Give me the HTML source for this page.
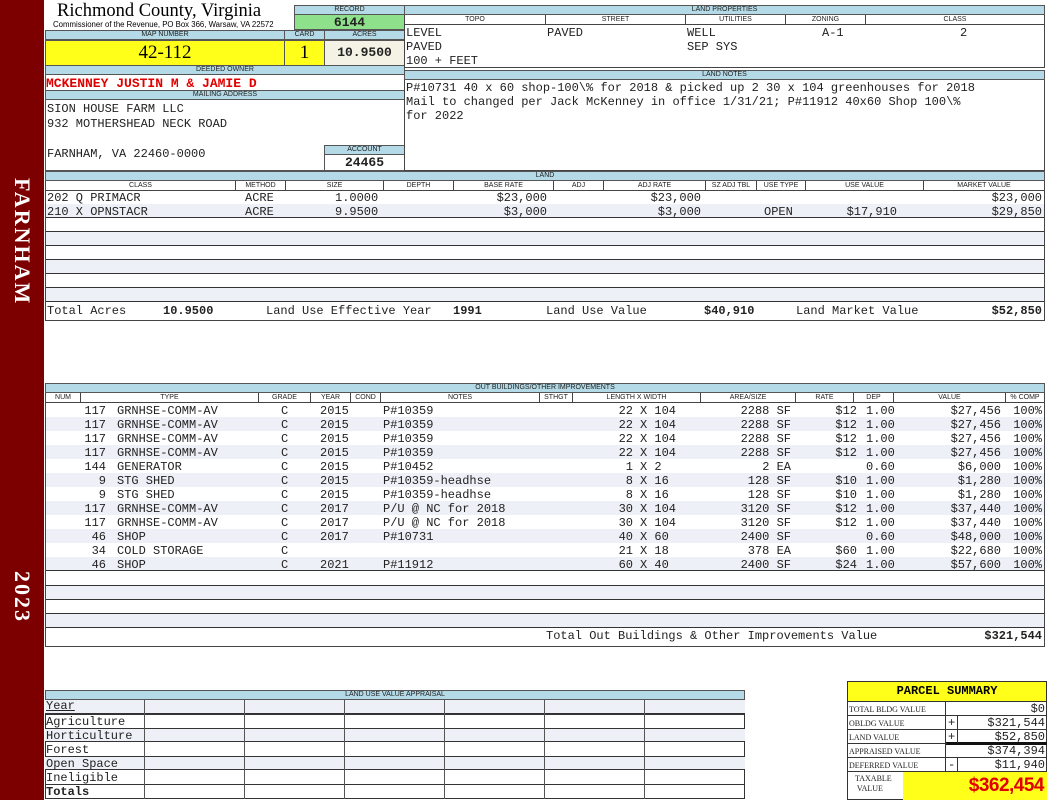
<!DOCTYPE html>
<html><head><meta charset="utf-8"><style>
*{margin:0;padding:0;box-sizing:border-box}
body{width:1050px;height:800px;background:#fff;position:relative;overflow:hidden;font-family:"Liberation Mono",monospace;font-size:12px;color:#222}
.a{position:absolute;white-space:pre}
.bar{position:absolute;background:#b3dae6;border:1px solid #555;font-family:"Liberation Sans",sans-serif;font-size:7px;text-align:center;line-height:8px;color:#222}
.hd{position:absolute;border:1px solid #444;border-top:none;font-family:"Liberation Sans",sans-serif;font-size:7px;text-align:center;line-height:9px;height:10px;background:#fff}
.row{position:absolute;left:45px;width:1000px;height:14px;border-bottom:1px solid #333}
.lt{background:#eef0f7}
.r{text-align:right}
.b{font-weight:bold}
.vt{position:absolute;color:#fff;font-family:"Liberation Serif",serif;font-weight:bold;font-size:22px;transform:rotate(90deg);transform-origin:left top;letter-spacing:2px}
</style></head><body>
<div style="position:absolute;left:0;top:0;width:44px;height:800px;background:#7c0000"></div>
<div class="vt" style="left:35px;top:178px">FARNHAM</div>
<div class="vt" style="left:35px;top:571px">2023</div>

<div class="a" style="left:57px;top:1px;font-family:'Liberation Serif',serif;font-size:18.5px;color:#000">Richmond County, Virginia</div>
<div class="a" style="left:53px;top:20px;font-family:'Liberation Sans',sans-serif;font-size:7.8px;color:#000">Commissioner of the Revenue, PO Box 366, Warsaw, VA 22572</div>

<div class="bar" style="left:294px;top:5px;width:111px;height:10px">RECORD</div>
<div class="a b" style="left:294px;top:15px;width:111px;height:15px;background:#8fe08a;border:1px solid #555;border-top:none;text-align:center;font-size:13px;line-height:15px">6144</div>

<div class="bar" style="left:45px;top:30px;width:240px;height:10px">MAP NUMBER</div>
<div class="bar" style="left:284px;top:30px;width:41px;height:10px">CARD</div>
<div class="bar" style="left:324px;top:30px;width:81px;height:10px">ACRES</div>
<div class="a" style="left:45px;top:40px;width:240px;height:26px;background:#ffff1a;border:1px solid #555;text-align:center;font-family:'Liberation Serif',serif;font-size:19px;line-height:24px;color:#000">42-112</div>
<div class="a" style="left:284px;top:40px;width:41px;height:26px;background:#ffff1a;border:1px solid #555;text-align:center;font-family:'Liberation Serif',serif;font-size:19px;line-height:24px;color:#000">1</div>
<div class="a b" style="left:324px;top:40px;width:81px;height:26px;background:#f4f2e4;border:1px solid #555;text-align:center;font-size:13px;line-height:24px">10.9500</div>
<div class="bar" style="left:45px;top:65px;width:360px;height:10px">DEEDED OWNER</div>
<div class="a b" style="left:46px;top:76px;color:#e00000;font-size:13px">MCKENNEY JUSTIN M &amp; JAMIE D</div>
<div class="bar" style="left:45px;top:90px;width:360px;height:10px">MAILING ADDRESS</div>
<div class="a" style="left:47px;top:102px">SION HOUSE FARM LLC</div>
<div class="a" style="left:47px;top:117px">932 MOTHERSHEAD NECK ROAD</div>
<div class="a" style="left:47px;top:147px">FARNHAM, VA 22460-0000</div>
<div class="bar" style="left:324px;top:145px;width:81px;height:10px">ACCOUNT</div>
<div class="a b" style="left:324px;top:155px;width:81px;height:16px;border:1px solid #555;border-top:none;text-align:center;font-size:13px;line-height:15px">24465</div>
<div style="position:absolute;left:45px;top:65px;width:360px;height:106px;border:1px solid #555"></div>

<div class="bar" style="left:404px;top:5px;width:641px;height:10px">LAND PROPERTIES</div>
<div class="hd" style="left:404px;top:15px;width:142px">TOPO</div>
<div class="hd" style="left:545px;top:15px;width:141px">STREET</div>
<div class="hd" style="left:685px;top:15px;width:101px">UTILITIES</div>
<div class="hd" style="left:785px;top:15px;width:81px">ZONING</div>
<div class="hd" style="left:865px;top:15px;width:180px">CLASS</div>
<div style="position:absolute;left:404px;top:25px;width:641px;height:43px;border:1px solid #444;border-top:none"></div>
<div class="a" style="left:406px;top:26px;line-height:14px">LEVEL
PAVED
100 + FEET</div>
<div class="a" style="left:547px;top:26px">PAVED</div>
<div class="a" style="left:687px;top:26px;line-height:14px">WELL
SEP SYS</div>
<div class="a" style="left:822px;top:26px">A-1</div>
<div class="a" style="left:960px;top:26px">2</div>
<div class="bar" style="left:404px;top:70px;width:641px;height:10px">LAND NOTES</div>
<div style="position:absolute;left:404px;top:80px;width:641px;height:91px;border:1px solid #444;border-top:none"></div>
<div class="a" style="left:406px;top:81px;line-height:14px">P#10731 40 x 60 shop-100\% for 2018 &amp; picked up 2 30 x 104 greenhouses for 2018
Mail to changed per Jack McKenney in office 1/31/21; P#11912 40x60 Shop 100\%
for 2022</div>

<div class="bar" style="left:45px;top:171px;width:1000px;height:10px">LAND</div>
<div class="hd" style="left:45px;top:181px;width:191px">CLASS</div>
<div class="hd" style="left:235px;top:181px;width:51px">METHOD</div>
<div class="hd" style="left:285px;top:181px;width:99px">SIZE</div>
<div class="hd" style="left:383px;top:181px;width:71px">DEPTH</div>
<div class="hd" style="left:453px;top:181px;width:101px">BASE RATE</div>
<div class="hd" style="left:553px;top:181px;width:51px">ADJ</div>
<div class="hd" style="left:603px;top:181px;width:103px">ADJ RATE</div>
<div class="hd" style="left:705px;top:181px;width:52px">SZ ADJ TBL</div>
<div class="hd" style="left:756px;top:181px;width:50px">USE TYPE</div>
<div class="hd" style="left:805px;top:181px;width:119px">USE VALUE</div>
<div class="hd" style="left:923px;top:181px;width:122px">MARKET VALUE</div>
<div class="row" style="top:190px;border-bottom:none"></div>
<div class="row lt" style="top:204px"></div>
<div class="row" style="top:218px"></div>
<div class="row lt" style="top:232px"></div>
<div class="row" style="top:246px"></div>
<div class="row lt" style="top:260px"></div>
<div class="row" style="top:274px"></div>
<div class="row lt" style="top:288px"></div>
<div style="position:absolute;left:45px;top:190px;width:1000px;height:131px;border:1px solid #444;border-top:none"></div>
<div class="a" style="left:47px;top:191px;line-height:14px">202 Q PRIMACR
210 X OPNSTACR</div>
<div class="a" style="left:245px;top:191px;line-height:14px">ACRE
ACRE</div>
<div class="a" style="left:335px;top:191px;line-height:14px">1.0000
9.9500</div>
<div class="a r" style="left:440px;width:107px;top:191px;line-height:14px">$23,000
$3,000</div>
<div class="a r" style="left:590px;width:111px;top:191px;line-height:14px">$23,000
$3,000</div>
<div class="a" style="left:764px;top:205px">OPEN</div>
<div class="a r" style="left:790px;width:107px;top:205px">$17,910</div>
<div class="a r" style="left:930px;width:112px;top:191px;line-height:14px">$23,000
$29,850</div>
<div class="a" style="left:47px;top:304px">Total Acres</div>
<div class="a b" style="left:163px;top:304px">10.9500</div>
<div class="a" style="left:266px;top:304px">Land Use Effective Year</div>
<div class="a b" style="left:453px;top:304px">1991</div>
<div class="a" style="left:546px;top:304px">Land Use Value</div>
<div class="a b" style="left:704px;top:304px">$40,910</div>
<div class="a" style="left:796px;top:304px">Land Market Value</div>
<div class="a b r" style="left:930px;width:112px;top:304px">$52,850</div>

<div class="bar" style="left:45px;top:383px;width:1000px;height:10px">OUT BUILDINGS/OTHER IMPROVEMENTS</div>
<div class="hd" style="left:45px;top:393px;width:36px">NUM</div>
<div class="hd" style="left:80px;top:393px;width:179px">TYPE</div>
<div class="hd" style="left:258px;top:393px;width:53px">GRADE</div>
<div class="hd" style="left:310px;top:393px;width:41px">YEAR</div>
<div class="hd" style="left:350px;top:393px;width:31px">COND</div>
<div class="hd" style="left:380px;top:393px;width:160px">NOTES</div>
<div class="hd" style="left:539px;top:393px;width:34px">STHGT</div>
<div class="hd" style="left:572px;top:393px;width:129px">LENGTH X WIDTH</div>
<div class="hd" style="left:700px;top:393px;width:96px">AREA/SIZE</div>
<div class="hd" style="left:795px;top:393px;width:59px">RATE</div>
<div class="hd" style="left:853px;top:393px;width:41px">DEP</div>
<div class="hd" style="left:893px;top:393px;width:113px">VALUE</div>
<div class="hd" style="left:1005px;top:393px;width:40px">% COMP</div>
<div class="row" style="top:403px;border-bottom:none"></div>
<div class="row lt" style="top:417px;border-bottom:none"></div>
<div class="row" style="top:431px;border-bottom:none"></div>
<div class="row lt" style="top:445px;border-bottom:none"></div>
<div class="row" style="top:459px;border-bottom:none"></div>
<div class="row lt" style="top:473px;border-bottom:none"></div>
<div class="row" style="top:487px;border-bottom:none"></div>
<div class="row lt" style="top:501px;border-bottom:none"></div>
<div class="row" style="top:515px;border-bottom:none"></div>
<div class="row lt" style="top:529px;border-bottom:none"></div>
<div class="row" style="top:543px;border-bottom:none"></div>
<div class="row lt" style="top:557px"></div>
<div class="row" style="top:572px"></div>
<div class="row lt" style="top:586px"></div>
<div class="row" style="top:600px"></div>
<div class="row lt" style="top:614px"></div>
<div style="position:absolute;left:45px;top:403px;width:1000px;height:244px;border:1px solid #444;border-top:none"></div>
<div class="a r" style="left:55px;width:51px;top:404px;line-height:14px">117
117
117
117
144
9
9
117
117
46
34
46</div>
<div class="a" style="left:117px;top:404px;line-height:14px">GRNHSE-COMM-AV
GRNHSE-COMM-AV
GRNHSE-COMM-AV
GRNHSE-COMM-AV
GENERATOR
STG SHED
STG SHED
GRNHSE-COMM-AV
GRNHSE-COMM-AV
SHOP
COLD STORAGE
SHOP</div>
<div class="a" style="left:281px;top:404px;line-height:14px">C
C
C
C
C
C
C
C
C
C
C
C</div>
<div class="a" style="left:320px;top:404px;line-height:14px">2015
2015
2015
2015
2015
2015
2015
2017
2017
2017

2021</div>
<div class="a" style="left:383px;top:404px;line-height:14px">P#10359
P#10359
P#10359
P#10359
P#10452
P#10359-headhse
P#10359-headhse
P/U @ NC for 2018
P/U @ NC for 2018
P#10731

P#11912</div>
<div class="a r" style="left:590px;width:43px;top:404px;line-height:14px">22
22
22
22
1
8
8
30
30
40
21
60</div>
<div class="a" style="left:640px;top:404px;line-height:14px">X 104
X 104
X 104
X 104
X 2
X 16
X 16
X 104
X 104
X 60
X 18
X 40</div>
<div class="a r" style="left:700px;width:91px;top:404px;line-height:14px">2288 SF
2288 SF
2288 SF
2288 SF
2 EA
128 SF
128 SF
3120 SF
3120 SF
2400 SF
378 EA
2400 SF</div>
<div class="a r" style="left:800px;width:57px;top:404px;line-height:14px">$12
$12
$12
$12

$10
$10
$12
$12

$60
$24</div>
<div class="a" style="left:866px;top:404px;line-height:14px">1.00
1.00
1.00
1.00
0.60
1.00
1.00
1.00
1.00
0.60
1.00
1.00</div>
<div class="a r" style="left:900px;width:101px;top:404px;line-height:14px">$27,456
$27,456
$27,456
$27,456
$6,000
$1,280
$1,280
$37,440
$37,440
$48,000
$22,680
$57,600</div>
<div class="a r" style="left:1005px;width:37px;top:404px;line-height:14px">100%
100%
100%
100%
100%
100%
100%
100%
100%
100%
100%
100%</div>
<div class="a" style="left:546px;top:629px">Total Out Buildings &amp; Other Improvements Value</div>
<div class="a b r" style="left:930px;width:112px;top:629px">$321,544</div>

<div class="bar" style="left:45px;top:690px;width:700px;height:10px">LAND USE VALUE APPRAISAL</div>
<div style="position:absolute;left:45px;top:700px;width:700px;height:14px;background:#eef0f7;border-bottom:1px solid #333"></div>
<div style="position:absolute;left:45px;top:714px;width:700px;height:85px;border:1px solid #333;border-top:1px solid #333"></div>
<div style="position:absolute;left:45px;top:728px;width:700px;height:14px;background:#eef0f7;border-top:1px solid #333;border-bottom:1px solid #333"></div>
<div style="position:absolute;left:45px;top:756px;width:700px;height:14px;background:#eef0f7;border-top:1px solid #333;border-bottom:1px solid #333"></div>
<div style="position:absolute;left:45px;top:784px;width:700px;height:1px;background:#333"></div>
<div style="position:absolute;left:144px;top:700px;width:1px;height:99px;background:#555"></div>
<div style="position:absolute;left:244px;top:700px;width:1px;height:99px;background:#555"></div>
<div style="position:absolute;left:344px;top:700px;width:1px;height:99px;background:#555"></div>
<div style="position:absolute;left:444px;top:700px;width:1px;height:99px;background:#555"></div>
<div style="position:absolute;left:544px;top:700px;width:1px;height:99px;background:#555"></div>
<div style="position:absolute;left:644px;top:700px;width:1px;height:99px;background:#555"></div>
<div class="a" style="left:46px;top:699px;text-decoration:underline">Year</div>
<div class="a" style="left:46px;top:715px;line-height:14px">Agriculture
Horticulture
Forest
Open Space
Ineligible</div>
<div class="a b" style="left:46px;top:785px">Totals</div>

<div class="a b" style="left:847px;top:681px;width:200px;height:21px;background:#ffff1a;border:1px solid #333;text-align:center;font-family:'Liberation Mono',monospace;font-size:12px;line-height:19px;color:#000">PARCEL SUMMARY</div>
<div style="position:absolute;left:847px;top:701px;width:200px;height:99px;border:1px solid #333"></div>
<div style="position:absolute;left:847px;top:715px;width:200px;height:1px;background:#333"></div>
<div style="position:absolute;left:847px;top:729px;width:200px;height:1px;background:#333"></div>
<div style="position:absolute;left:945px;top:742px;width:102px;height:3px;background:#111"></div>
<div style="position:absolute;left:847px;top:743px;width:100px;height:1px;background:#333"></div>
<div style="position:absolute;left:847px;top:757px;width:200px;height:1px;background:#333"></div>
<div style="position:absolute;left:847px;top:771px;width:200px;height:1px;background:#333"></div>
<div style="position:absolute;left:945px;top:701px;width:1px;height:70px;background:#333"></div>
<div style="position:absolute;left:957px;top:715px;width:1px;height:28px;background:#333"></div>
<div style="position:absolute;left:957px;top:757px;width:1px;height:14px;background:#333"></div>
<div class="a" style="left:849px;top:703px;font-family:'Liberation Serif',serif;font-size:8px;line-height:14px">TOTAL BLDG VALUE
OBLDG VALUE
LAND VALUE
APPRAISED VALUE
DEFERRED VALUE</div>
<div class="a" style="left:948px;top:716px;line-height:14px">+
+

-</div>
<div class="a r" style="left:958px;width:87px;top:702px;line-height:14px">$0
$321,544
$52,850
$374,394
$11,940</div>
<div class="a" style="left:855px;top:774px;font-family:'Liberation Serif',serif;font-size:8px;line-height:10px">TAXABLE
 VALUE</div>
<div class="a b r" style="left:903px;top:772px;width:144px;height:28px;background:#ffff1a;color:#e00000;font-family:'Liberation Sans',sans-serif;font-size:19px;line-height:27px;padding-right:3px;letter-spacing:-0.5px">$362,454</div>
</body></html>
